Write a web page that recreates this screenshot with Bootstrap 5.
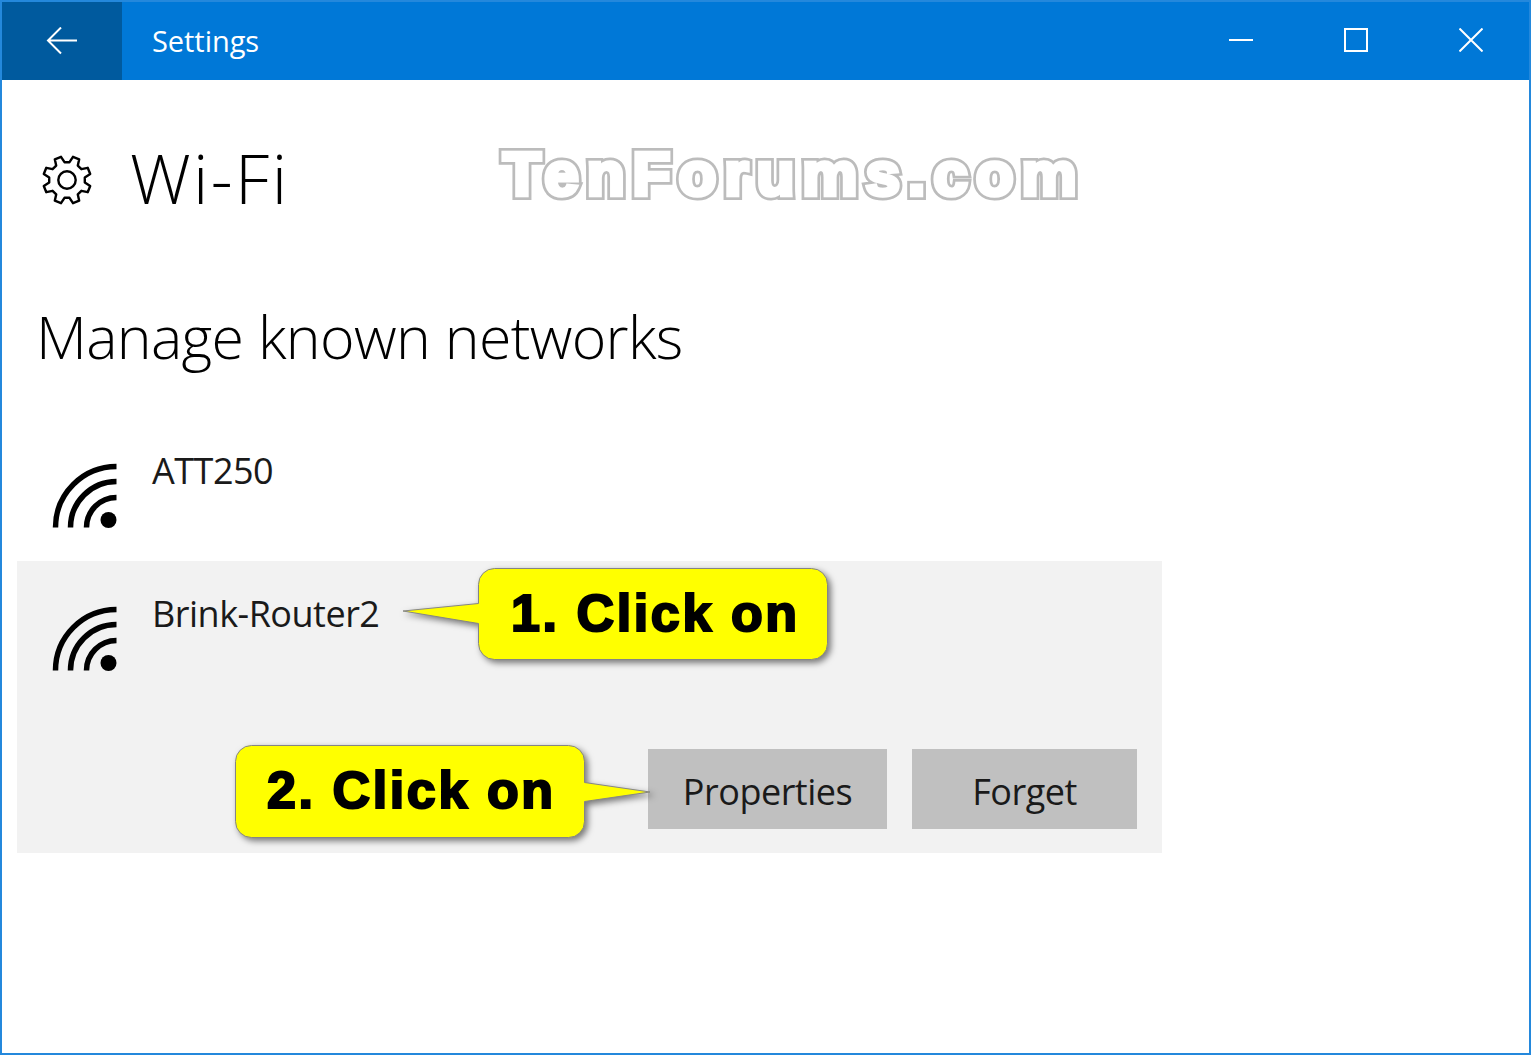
<!DOCTYPE html>
<html lang="en">
<head>
<meta charset="utf-8">
<title>Settings</title>
<link href="https://cdn.jsdelivr.net/npm/bootstrap@5.3.0/dist/css/bootstrap.min.css" rel="stylesheet">
<style>
html,body{height:100%;margin:0;background:#fff}
body{font-family:"Open Sans","Noto Sans",sans-serif;color:#000}
.win-frame{height:1055px;border:2px solid #2488dc;position:relative;overflow:hidden}
.title-strip{height:78px;background:#0078d7;color:#fff}
.back-box{width:120px;background:#005a9e}
.title-name{font-size:29px;margin-left:30px;letter-spacing:-.05px;line-height:78px}
.win-ctl{width:115px;padding:0 2px 2px 0}
.page-head{padding:70px 0 0 40px;height:180px}
.gear-ico{margin-top:5px}
.page-head h1{font-weight:300;font-size:68px;margin:0 0 0 38px;line-height:56px;letter-spacing:2.4px}
.sect-title{font-weight:300;font-size:59px;margin:0 0 0 34px;line-height:72px;padding-top:40px;height:158px;letter-spacing:-.67px}
.net-row{padding:0 25px 0 35px}
.net-plain{height:143px;margin-left:15px}
.net-sel{margin-left:15px;width:1145px;height:292px;background:#f2f2f2;position:relative}
.net-name{font-size:36px;color:#1a1a1a;letter-spacing:-.5px;line-height:44px;margin-left:35px}
.net-top{padding-top:31px}
.wifi-ico{margin-top:14px}
.net-btn{background:#c0c0c0;border:0;border-radius:0;height:80px;font-size:36px;letter-spacing:-.5px;color:#1a1a1a;padding:6px 0 0}
.net-btn:hover{background:#c0c0c0;color:#1a1a1a}
.btn-props{width:239px;margin-right:25px}
.btn-forget{width:225px}
.btn-row{position:absolute;right:25px;bottom:24px}
.water-mark{position:absolute;left:501px;top:132px;font:700 62px/80px "Liberation Sans",sans-serif;color:#fff;-webkit-text-stroke:10px #bcbcbc;letter-spacing:8px;white-space:nowrap}
.water-mark::after{content:attr(data-t);position:absolute;left:0;top:0;color:#fff;-webkit-text-stroke:4.5px #fff}
.call-out{position:absolute;width:435px;height:105px}
.call-out svg{position:absolute;left:0;top:0;overflow:visible;filter:drop-shadow(3px 3px 3px rgba(0,0,0,.5))}
.call-text{position:absolute;font:700 52px/60px "Liberation Sans",sans-serif;-webkit-text-stroke:2.2px #000;letter-spacing:2.6px;white-space:nowrap;color:#000}
.call-one{left:382px;top:4px}
.call-one .call-text{left:112px;top:18px}
.call-two{left:214px;top:181px}
.call-two .call-text{left:36px;top:18px}
</style>
</head>
<body>
<div class="win-frame">
  <div class="title-strip d-flex">
    <div class="back-box d-flex align-items-center justify-content-center">
      <svg width="32" height="28" viewBox="0 0 32 28" fill="none" stroke="#fff" stroke-width="2"><path d="M31 13.5H2M15 .5 2 13.5 15 26.5"/></svg>
    </div>
    <div class="title-name flex-grow-1">Settings</div>
    <div class="win-ctl d-flex align-items-center justify-content-center"><svg width="24" height="24" viewBox="0 0 24 24" fill="none" stroke="#fff" stroke-width="2"><path d="M0 12H24"/></svg></div>
    <div class="win-ctl d-flex align-items-center justify-content-center"><svg width="24" height="24" viewBox="0 0 24 24" fill="none" stroke="#fff" stroke-width="2"><rect x="1" y="1" width="22" height="22"/></svg></div>
    <div class="win-ctl d-flex align-items-center justify-content-center"><svg width="24" height="24" viewBox="0 0 24 24" fill="none" stroke="#fff" stroke-width="2"><path d="M.5.5 23.5 23.5M23.500.5.5 23.5"/></svg></div>
  </div>
  <div class="page-head d-flex align-items-start">
    <svg class="gear-ico" width="50" height="50" viewBox="-25 -25 50 50" fill="none" stroke="#000" stroke-width="2.4" stroke-linejoin="round"><polygon points="2.5,-17.8 6,-23.2 12.2,-20.7 10.8,-14.4 14.4,-10.8 20.7,-12.2 23.2,-6 17.8,-2.5 17.800,2.5 23.2,6 20.7,12.2 14.4,10.8 10.8,14.4 12.2,20.7 6,23.200 2.5,17.8 -2.5,17.8 -6,23.2 -12.2,20.7 -10.8,14.4 -14.4,10.8 -20.7,12.2 -23.2,6 -17.8,2.5 -17.8,-2.5 -23.2,-6 -20.7,-12.2 -14.4,-10.8 -10.8,-14.4 -12.2,-20.7 -6,-23.2 -2.5,-17.8"/><circle r="8.7"/></svg>
    <h1>Wi-Fi</h1>
  </div>
  <div class="sect-title">Manage known networks</div>
  <div class="net-plain net-row d-flex net-top">
    <svg class="wifi-ico flex-shrink-0" width="65" height="65" viewBox="0 0 65 65"><g fill="none" stroke="#000" stroke-width="5.5"><path d="M3.500 64.500A61 61 0 0 1 64.500 3.500M18.500 64.500A46 46 0 0 1 64.500 18.500M34.500 64.500A30 30 0 0 1 64.500 34.500"/></g><circle cx="56.500" cy="57" r="8" fill="#000"/></svg>
    <div class="net-name">ATT250</div>
  </div>
  <div class="net-sel">
    <div class="net-row d-flex net-top">
      <svg class="wifi-ico flex-shrink-0" width="65" height="65" viewBox="0 0 65 65"><g fill="none" stroke="#000" stroke-width="5.5"><path d="M3.500 64.500A61 61 0 0 1 64.500 3.500M18.500 64.500A46 46 0 0 1 64.500 18.500M34.500 64.500A30 30 0 0 1 64.500 34.500"/></g><circle cx="56.500" cy="57" r="8" fill="#000"/></svg>
      <div class="net-name">Brink-Router2</div>
    </div>
    <div class="btn-row d-flex">
      <button class="btn net-btn btn-props" type="button">Properties</button>
      <button class="btn net-btn btn-forget" type="button">Forget</button>
    </div>
    <div class="call-out call-one">
      <svg width="435" height="105" viewBox="0 0 435 105"><path d="M95.500 3.500H412.500a16 16 0 0 1 16 16V78.500a16 16 0 0 1-16 16H95.500a16 16 0 0 1-16-16V58.500L4 46 79.500 38.500V19.500a16 16 0 0 1 16-16Z" fill="#ff0" stroke="#858585"/></svg>
      <div class="call-text">1. Click on</div>
    </div>
    <div class="call-out call-two">
      <svg width="435" height="105" viewBox="0 0 435 105"><path d="M20.500 3.500H337.500a16 16 0 0 1 16 16V40.500L419 50 353.500 59.500V79.500a16 16 0 0 1-16 16H20.500a16 16 0 0 1-16-16V19.500a16 16 0 0 1 16-16Z" fill="#ff0" stroke="#858585"/></svg>
      <div class="call-text">2. Click on</div>
    </div>
  </div>
  <div class="water-mark" data-t="TenForums.com">TenForums.com</div>
</div>
<script src="https://cdn.jsdelivr.net/npm/bootstrap@5.3.0/dist/js/bootstrap.bundle.min.js"></script>
</body>
</html>
